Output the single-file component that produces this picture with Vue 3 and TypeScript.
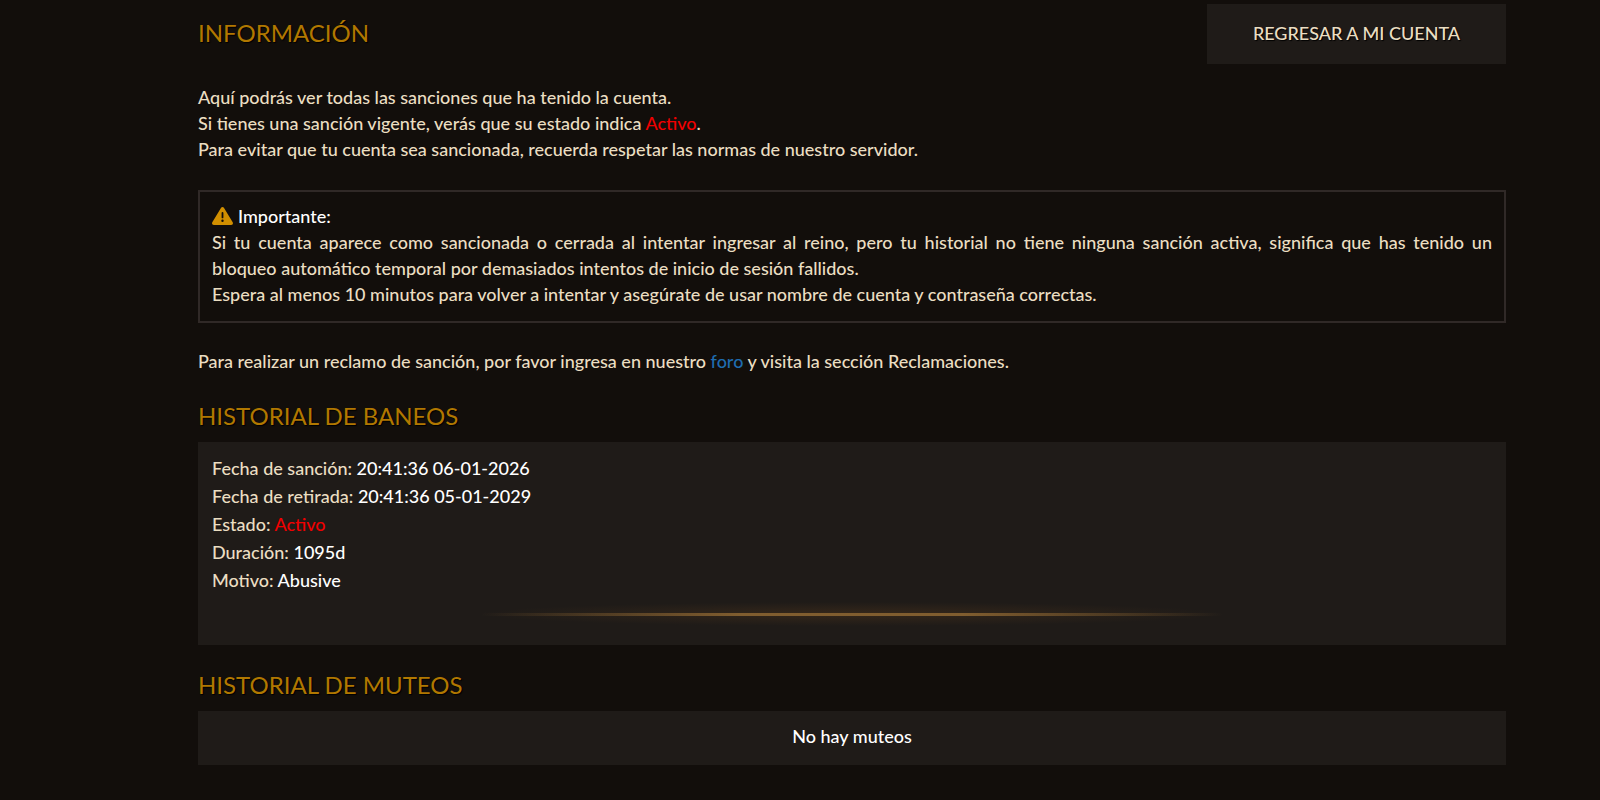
<script setup lang="ts">
interface SanctionField {
  label: string
  value: string
  active?: boolean
}

interface Sanction {
  id: number
  fields: SanctionField[]
}

const bans: Sanction[] = [
  {
    id: 1,
    fields: [
      { label: 'Fecha de sanción', value: '20:41:36 06-01-2026' },
      { label: 'Fecha de retirada', value: '20:41:36 05-01-2029' },
      { label: 'Estado', value: 'Activo', active: true },
      { label: 'Duración', value: '1095d' },
      { label: 'Motivo', value: 'Abusive' },
    ],
  },
]

const mutes: Sanction[] = []
</script>

<template>
  <main class="page">
    <header class="top">
      <h1 class="title">Información</h1>
      <button type="button" class="back">Regresar a mi cuenta</button>
    </header>

    <p class="intro">
      Aquí podrás ver todas las sanciones que ha tenido la cuenta.<br />
      Si tienes una sanción vigente, verás que su estado indica <span class="active">Activo</span>.<br />
      Para evitar que tu cuenta sea sancionada, recuerda respetar las normas de nuestro servidor.
    </p>

    <section class="notice">
      <div class="notice-head">
        <svg class="warning" viewBox="0 0 21 18" aria-hidden="true">
          <path
            fill="#d18f00"
            fill-rule="evenodd"
            d="M10.500 0c.6 0 1.100.3 1.400.8l8.800 14.500c.7 1.200-.1 2.700-1.500 2.700H1.800c-1.400 0-2.200-1.500-1.500-2.700L9.100.8c.3-.5.8-.8 1.400-.8zm0 5c-.6 0-.9.4-.9.900v4.500c0 .5.3.9.9.9s.9-.4.9-.9V5.900c0-.5-.3-.9-.9-.9zm0 7.600a1.200 1.200 0 1 0 0 2.400 1.200 1.200 0 0 0 0-2.400z"
          />
        </svg>
        <span>Importante:</span>
      </div>
      <p class="notice-text">
        Si tu cuenta aparece como sancionada o cerrada al intentar ingresar al reino, pero tu historial no tiene ninguna sanción activa, significa que has tenido un <span class="keep">bloqueo automático temporal</span> por demasiados intentos de inicio de sesión fallidos.<br />
        Espera al menos 10 minutos para volver a intentar y asegúrate de usar nombre de cuenta y contraseña correctas.
      </p>
    </section>

    <p class="claim">
      Para realizar un reclamo de sanción, por favor ingresa en nuestro
      <a href="#foro">foro</a> y visita la sección Reclamaciones.
    </p>

    <h2 class="title">Historial de baneos</h2>
    <section class="panel">
      <article v-for="ban in bans" :key="ban.id">
        <div v-for="field in ban.fields" :key="field.label" class="field">
          {{ field.label }}: <span :class="field.active ? 'active' : 'value'">{{ field.value }}</span>
        </div>
        <div class="divider"></div>
      </article>
    </section>

    <h2 class="title">Historial de muteos</h2>
    <section class="panel">
      <p v-if="mutes.length === 0" class="empty">No hay muteos</p>
    </section>
  </main>
</template>

<style>
body {
  margin: 0;
  background: #120e0b;
}
</style>

<style scoped>
.page {
  padding: 4px 94px 36px 198px;
  color: #ebdec2;
  font-family: Lato, 'Liberation Sans', sans-serif;
  font-size: 18px;
  font-weight: 500;
  line-height: 26px;
}

p {
  margin: 0;
}

.top {
  display: flex;
  align-items: center;
  justify-content: space-between;
}

.title {
  margin: 0;
  padding-bottom: 2px;
  color: #b17800;
  font-size: 24px;
  font-weight: 400;
  line-height: 28px;
  text-transform: uppercase;
  text-shadow: 1px 1px 1px #000;
}

.back {
  width: 299px;
  height: 60px;
  padding: 0 0 2px;
  border: 0;
  background: #1f1b18;
  color: #ebdec2;
  font: inherit;
  text-transform: uppercase;
  text-shadow: 1px 1px 1px #000;
  cursor: pointer;
}

.intro {
  margin: 20px 0 28px;
}

.active {
  color: #f00000;
}

.notice {
  padding: 11px 12px 14px;
  border: 2px solid #302927;
}

.notice-head {
  display: flex;
  align-items: center;
  gap: 5px;
  color: #fff;
}

.warning {
  width: 21px;
  height: 18px;
}

.notice-text {
  text-align: justify;
}

.keep {
  white-space: nowrap;
}

.claim {
  margin: 25px 0 28px;
}

.claim a {
  color: #1f6cb0;
  text-decoration: none;
}

.panel {
  margin: 10px 0 26px;
  padding: 12px 14px 16px;
  background: #1f1b18;
}

.field {
  line-height: 28px;
}

.value,
.empty {
  color: #fff;
}

.empty {
  text-align: center;
}

.divider {
  width: 58%;
  height: 35px;
  margin: 0 auto;
  background:
    linear-gradient(90deg, transparent, #805d2f 35%, #805d2f 65%, transparent) center 19px / 100% 3px no-repeat,
    radial-gradient(ellipse 50% 12px at 50% 20px, #35271a, transparent);
}
</style>
